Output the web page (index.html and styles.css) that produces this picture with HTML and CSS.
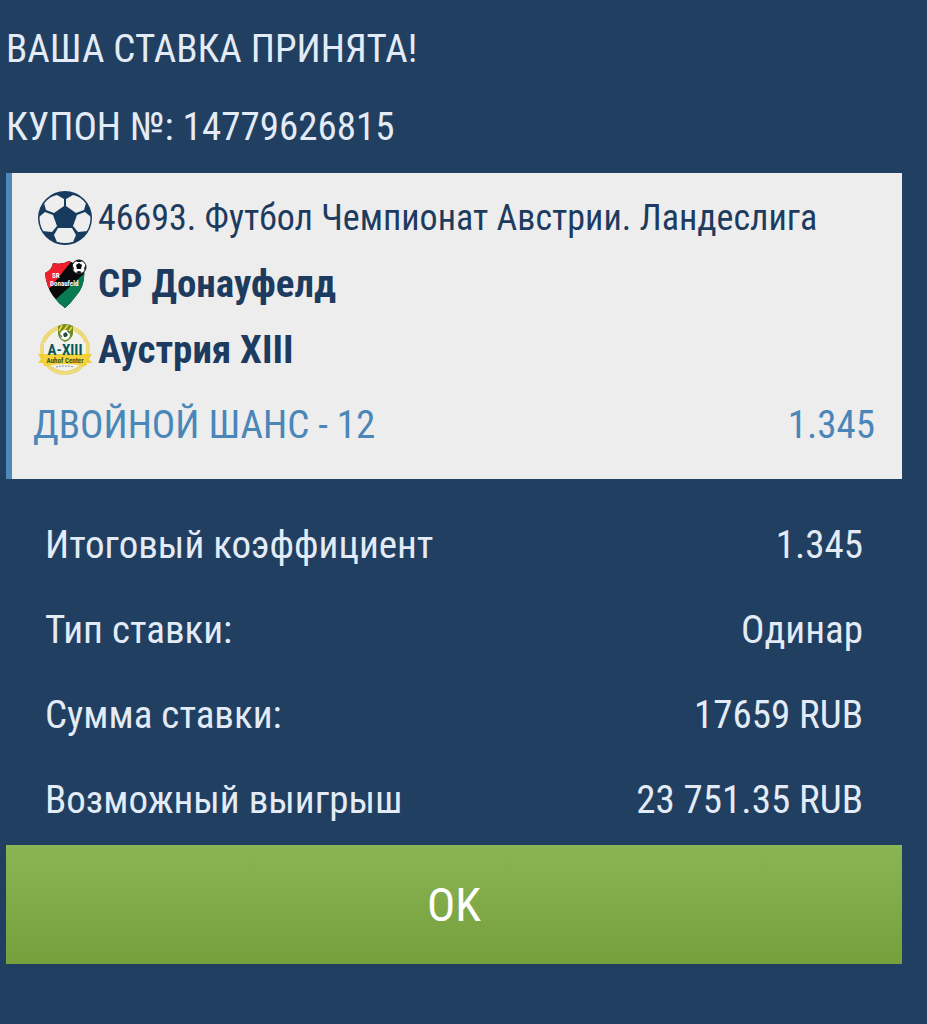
FILE: index.html
```html
<!DOCTYPE html>
<html lang="ru">
<head>
<meta charset="utf-8">
<meta name="viewport" content="width=device-width, initial-scale=1">
<title>Ваша ставка принята</title>
<link rel="stylesheet" href="styles.css">
</head>
<body>
<main class="receipt">
  <h1 class="heading">ВАША СТАВКА ПРИНЯТА!</h1>
  <p class="heading">КУПОН №: 14779626815</p>

  <section class="card">
    <div class="line league">
      <svg class="icon" viewBox="0 0 54 54" aria-hidden="true">
        <defs><clipPath id="ball"><circle cx="27" cy="27" r="25.5"/></clipPath></defs>
        <circle cx="27" cy="27" r="27" fill="#173b5e"/>
        <g fill="#eeeeee" clip-path="url(#ball)">
          <path d="M26 8V15L16 22L8 19L6 12Q12 5 19 4Z"/>
          <path d="M28 8V15L38 22L46 19L48 12Q42 5 35 4Z"/>
          <path d="M7 21L15 24L19 35L14 41L4 40Q0 32 1 26Z"/>
          <path d="M47 21L39 24L35 35L40 41L50 40Q54 32 53 26Z"/>
          <path d="M20 37H34L38 44L35 51Q27 53 19 51L16 44Z"/>
        </g>
      </svg>
      <span>46693. Футбол Чемпионат Австрии. Ландеслига</span>
    </div>
    <div class="line team">
      <svg class="icon" viewBox="0 0 54 54" aria-hidden="true">
        <defs><clipPath id="shield"><path d="M15 6Q24 8 31 4L46 11Q48 28 38 39Q33 46 27 51Q20 46 15 39Q8 29 7 16Q14 13 15 6Z"/></clipPath></defs>
        <g clip-path="url(#shield)">
          <path fill="#08090a" d="M0 0H54V54H0Z"/>
          <path fill="#ed202c" d="M0 0H37L12 31H0Z"/>
          <path fill="#087b52" d="M50 13L16 44L26 54H50Z"/>
        </g>
        <circle cx="41" cy="10" r="7" fill="#ffffff" stroke="#08090a" stroke-width="1"/>
        <path fill="#08090a" d="M38 8L41 6L44 8L43 12H39ZM37 4L41 3L45 4L42 5H40ZM34 8L36 11L35 14ZM48 8L46 11L47 14ZM38 15L41 14L44 15L41 17Z"/>
        <text class="logo-text" x="14" y="21" font-size="7" fill="#ffffff">SR</text>
        <text class="logo-text" x="12" y="29" font-size="7" fill="#ffffff">Donaufeld</text>
      </svg>
      <span>СР Донауфелд</span>
    </div>
    <div class="line team">
      <svg class="icon" viewBox="0 0 54 54" aria-hidden="true">
        <circle cx="27" cy="27" r="23" fill="#f1f1ed" stroke="#ecd66c" stroke-width="4"/>
        <circle cx="27" cy="27" r="23" fill="none" stroke="#f4e9ae" stroke-width="1" stroke-dasharray="2 1"/>
        <path fill="#f1f1ed" d="M6 20H48V32H6Z"/>
        <path fill="#eed034" d="M0 31H54L51 36L54 40H48V43Q27 39 6 43V40H0L3 36Z"/>
        <path fill="#f5d23a" d="M5 31Q27 35 49 31V42Q27 39 5 42Z"/>
        <path fill="#6d8c27" d="M20 3Q27 -1 35 3V11Q34 16 27 19Q20 16 20 10Z"/>
        <path stroke="#e9cf38" stroke-width="2" d="M24 2L21 8M30 2L23 11M34 4L28 12"/>
        <circle cx="27" cy="12" r="5" fill="#ffffff"/>
        <path fill="#244c39" d="M25 11L28 9L30 12L28 14H26ZM22 11L24 13L23 15ZM31 8L29 8L32 11Z"/>
        <text class="logo-text" x="27" y="32" text-anchor="middle" font-size="15" fill="#07595c">A-XIII</text>
        <text class="logo-text" x="27" y="40" text-anchor="middle" font-size="7" fill="#3d551d">Auhof Center</text>
        <path d="M18 44Q27 42 36 44" fill="none" stroke="#819aa1" stroke-width="1" stroke-dasharray="2 1"/>
      </svg>
      <span>Аустрия XIII</span>
    </div>
    <div class="outcome">
      <span>ДВОЙНОЙ ШАНС - 12</span>
      <span>1.345</span>
    </div>
  </section>

  <dl class="summary">
    <div class="row"><dt>Итоговый коэффициент</dt><dd>1.345</dd></div>
    <div class="row"><dt>Тип ставки:</dt><dd>Одинар</dd></div>
    <div class="row"><dt>Сумма ставки:</dt><dd>17659 RUB</dd></div>
    <div class="row"><dt>Возможный выигрыш</dt><dd>23 751.35 RUB</dd></div>
  </dl>

  <button class="ok" type="button">OK</button>
</main>
</body>
</html>
```
FILE: styles.css
```css
* {
  box-sizing: border-box;
}

body {
  margin: 0;
  min-height: 100vh;
  background: #213f61;
  color: #e3ebf6;
  font-family: "Roboto Condensed", Roboto, sans-serif;
  font-size: 39px;
  line-height: 48px;
}

.receipt {
  padding: 25px 25px 60px 6px;
}

.heading {
  margin: 0 0 30px;
  font-size: 39px;
  font-weight: 400;
}

.heading + .heading {
  margin-bottom: 22px;
}

.card {
  padding: 12px 27px 30px 21px;
  border-left: 6px solid #4e89b9;
  background: #ededed;
  color: #1d3b5f;
}

.line {
  display: flex;
  align-items: center;
  gap: 6px;
  min-height: 66px;
  padding-left: 5px;
}

.icon {
  flex: none;
  width: 54px;
  height: 54px;
}

.league {
  font-size: 36px;
}

.team {
  font-weight: 700;
}

.logo-text {
  font-family: "Roboto Condensed", Roboto, sans-serif;
  font-weight: 700;
}

.outcome {
  display: flex;
  justify-content: space-between;
  gap: 24px;
  padding-top: 18px;
  color: #4a86b8;
}

.summary {
  margin: 0;
  padding: 23px 39px 3px;
}

.row {
  display: flex;
  align-items: center;
  justify-content: space-between;
  gap: 24px;
  min-height: 85px;
}

.row dd {
  margin: 0;
}

.ok {
  display: block;
  width: 100%;
  min-height: 119px;
  padding: 0;
  border: 0;
  background: linear-gradient(#8bb452, #75a03c);
  color: #ffffff;
  font: inherit;
  font-size: 47px;
  cursor: pointer;
}
```
